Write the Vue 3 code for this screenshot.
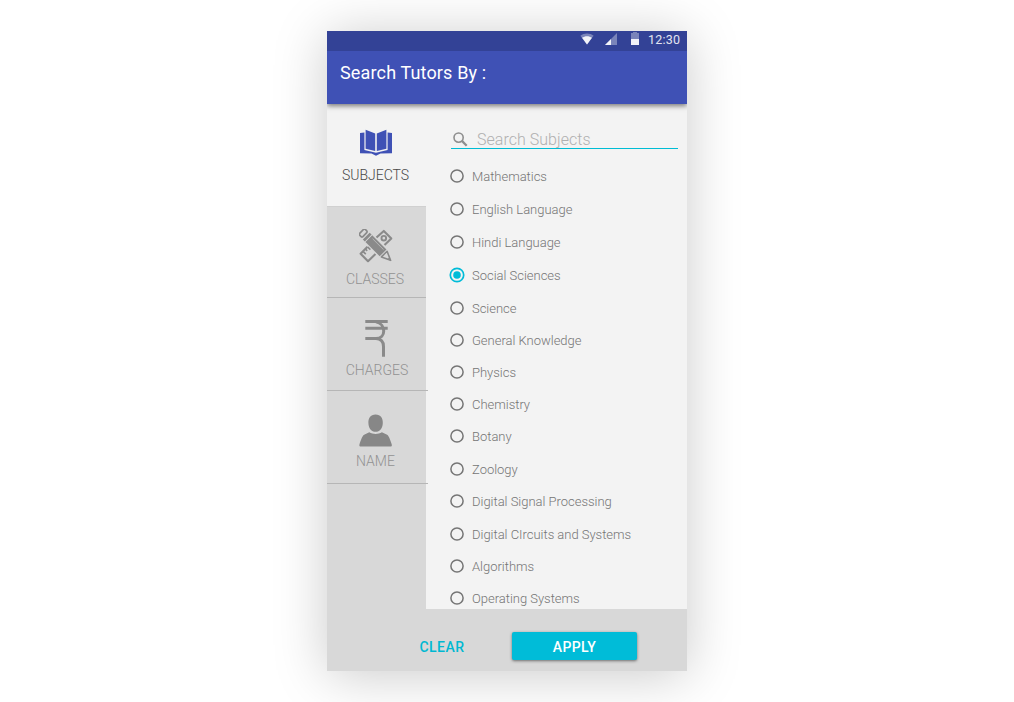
<script setup>
import { ref } from 'vue'

const tabs = [
  { id: 'subjects', label: 'SUBJECTS' },
  { id: 'classes', label: 'CLASSES' },
  { id: 'charges', label: 'CHARGES' },
  { id: 'name', label: 'NAME' },
]
const activeTab = ref('subjects')

const subjects = [
  { name: 'Mathematics', tall: true },
  { name: 'English Language', tall: true },
  { name: 'Hindi Language', tall: true },
  { name: 'Social Sciences', tall: true },
  { name: 'Science' },
  { name: 'General Knowledge' },
  { name: 'Physics' },
  { name: 'Chemistry' },
  { name: 'Botany', tall: true },
  { name: 'Zoology' },
  { name: 'Digital Signal Processing', tall: true },
  { name: 'Digital CIrcuits and Systems' },
  { name: 'Algorithms' },
  { name: 'Operating Systems' },
]
const selected = ref('Social Sciences')
</script>

<template>
  <main class="stage">
    <div class="phone">
      <div class="status">
        <svg class="wifi" width="14" height="12" viewBox="0 0 14 12">
          <path d="M0.4 2.7C4-.2 10-.2 13.6 2.7L7 11.6z" fill="#fff" opacity=".35" />
          <path d="M2 4.7C5 2.6 9 2.6 12 4.7L7 11.6z" fill="#fff" opacity=".9" />
        </svg>
        <svg class="cell" width="12" height="12" viewBox="0 0 12 12">
          <path d="M0 12 12 0V12z" fill="#fff" opacity=".35" />
          <path d="M0 12 6 6V12z" fill="#fff" opacity=".9" />
        </svg>
        <svg class="battery" width="8" height="13" viewBox="0 0 8 13">
          <path d="M2 0H6V1H8V7H0V1H2z" fill="#fff" opacity=".35" />
          <path d="M0 7H8V13H0z" fill="#fff" opacity=".93" />
        </svg>
        <span class="time">12:30</span>
      </div>
      <header class="header">Search Tutors By :</header>

      <div class="body">
        <nav class="tabs">
          <button
            v-for="tab in tabs"
            :key="tab.id"
            :class="['tab', tab.id, { active: tab.id === activeTab }]"
            @click="activeTab = tab.id"
          >
            <svg v-if="tab.id === 'subjects'" class="icon" width="32" height="27" viewBox="0 0 32 27" fill="#3f51b5">
              <path d="M5.6 .8 15.2 4.4V22L5.6 19.7z" />
              <path d="M26.4 .8 16.8 4.4V22L26.4 19.7z" />
              <path d="M0 4 4.4 3.4V21.1L16 23.8 27.6 21.1V3.4L32 4V24.2L20.5 24.4 16 26.8 11.5 24.4 0 24.2z" />
            </svg>
            <svg v-else-if="tab.id === 'classes'" class="icon" width="34" height="34" viewBox="0 0 34 34">
              <g fill="none" stroke="#8a8a8a" stroke-width="2.1" stroke-linejoin="round">
                <path d="M17.5 8.6 24.8 1.9 32.3 9.4 25.5 16" />
                <circle cx="24.8" cy="9.2" r="2.3" stroke-width="1.9" />
                <path d="M8.5 17.8 1.6 24.7 9 32.2 16.5 25" />
                <path d="M4 22.4 6.8 25.2M6.4 20 8.2 21.8M8.6 17.8 11.4 20.6" stroke-width="1.7" />
              </g>
              <g transform="translate(5.4 5.2) rotate(45)">
                <path d="M-5-5.6H30L40 0 30 5.6H-5z" fill="#d8d8d8" />
                <rect x="-4" y="-4" width="4.6" height="8" rx="1.3" fill="none" stroke="#8a8a8a" stroke-width="1.7" />
                <path d="M2.6-4.8H5.4V4.8H2.6zM6.3-4.8H26.4V4.8H6.3z" fill="#8a8a8a" />
                <path d="M9-2.6H24.5" stroke="#c4c4c4" stroke-width=".7" />
                <path d="M28.1-4 37 0 28.1 4z" fill="none" stroke="#8a8a8a" stroke-width="1.6" stroke-linejoin="round" />
                <path d="M34-1.5 38 0 34 1.5z" fill="#8a8a8a" />
              </g>
            </svg>
            <svg v-else-if="tab.id === 'charges'" class="icon" width="23" height="38" viewBox="0 0 23 38" fill="none" stroke="#8a8a8a" stroke-width="3">
              <path d="M.3 2.5H22.7M.3 9.2H22.7M.3 19.5H11C21.3 19.5 21.3 5 11 2.8" />
              <path d="M11 19.5C15.8 19.8 18.5 22.5 18.5 27.5V37.8" />
            </svg>
            <svg v-else class="icon" width="34" height="34" viewBox="0.4 0 34 34" fill="#878787">
              <path d="M17 .4C22.2.4 24.4 4.2 24.2 8.9 24 14.2 21.1 17.8 17 17.8S10 14.2 9.8 8.9C9.6 4.2 11.8.4 17 .4z" />
              <path d="M10.7 18.3C14.3 20.4 19.7 20.4 23.3 18.3L28.5 20.7C30.4 21.7 31.8 26.5 33.1 30.2 33.6 31.6 33 32.5 31.7 32.5H2.3C1 32.5 .4 31.6.9 30.2 2.2 26.5 3.6 21.7 5.5 20.7z" />
            </svg>
            <span class="label">{{ tab.label }}</span>
          </button>
        </nav>

        <section class="panel">
          <label class="search">
            <svg width="15" height="15" viewBox="0 0 15 15" fill="none" stroke="#8e8e8e">
              <circle cx="5.6" cy="5.6" r="4.6" stroke-width="1.6" />
              <path d="M8.9 8.9 13.7 13.7" stroke-width="2.3" />
            </svg>
            <span>Search Subjects</span>
          </label>
          <ul class="list">
            <li
              v-for="s in subjects"
              :key="s.name"
              :class="['row', { tall: s.tall, selected: s.name === selected }]"
              @click="selected = s.name"
            >
              <svg class="radio" width="16" height="16" viewBox="0 0 16 16">
                <template v-if="s.name === selected">
                  <circle cx="8" cy="8" r="6.7" fill="none" stroke="#00bcd8" stroke-width="1.7" />
                  <circle cx="8" cy="8" r="3.8" fill="#00bcd8" />
                </template>
                <circle v-else cx="8" cy="8" r="6.1" fill="none" stroke="#757575" stroke-width="1.5" />
              </svg>
              <span>{{ s.name }}</span>
            </li>
          </ul>
        </section>
      </div>

      <footer class="footer">
        <button class="clear">CLEAR</button>
        <button class="apply">APPLY</button>
      </footer>
    </div>
  </main>
</template>

<style>
body {
  background: #fff;
  overflow: hidden;
}
</style>

<style scoped>
.stage {
  position: relative;
  z-index: 0;
  box-sizing: border-box;
  width: 1014px;
  height: 702px;
  padding: 31px 0 0 327px;
  overflow: hidden;
  font-family: Roboto, sans-serif;
}
button {
  border: 0;
  padding: 0;
  margin: 0;
  background: none;
  font-family: inherit;
}
.phone {
  position: relative;
  z-index: 0;
  display: flex;
  flex-direction: column;
  width: 360px;
  height: 640px;
  background: #d8d8d8;
  box-shadow: 0 4px 50px rgba(0, 0, 0, 0.21);
}
.status {
  display: flex;
  box-sizing: border-box;
  height: 20px;
  padding-left: 253px;
  background: #334296;
  color: #e3e5f1;
}
.status svg {
  flex: none;
}
.wifi {
  margin-top: 2px;
}
.cell {
  margin: 2px 0 0 11px;
}
.battery {
  margin: 1px 0 0 14px;
}
.time {
  margin-left: 9px;
  font-size: 12.5px;
  line-height: 18px;
  letter-spacing: 0.25px;
}
.header {
  position: relative;
  box-sizing: border-box;
  height: 53px;
  padding-left: 13px;
  background: #3f51b5;
  color: #fff;
  font-size: 18px;
  line-height: 44px;
  letter-spacing: 0.15px;
  box-shadow: 0 2px 5px rgba(0, 0, 0, 0.5);
  clip-path: inset(0 0 -10px 0);
}
.body {
  display: flex;
  height: 505px;
}
.tabs {
  width: 99px;
}
.tab {
  display: flex;
  flex-direction: column;
  align-items: center;
  box-sizing: border-box;
  width: 101px;
  height: 93px;
  padding-right: 4px;
  border-bottom: 1px solid #b6b6b6;
  color: #929292;
}
.tab.active {
  width: 99px;
  height: 102px;
  padding-right: 1px;
  border: 0;
  background: #f3f3f3;
  color: #484848;
}
.tab.classes {
  width: 99px;
  height: 92px;
  padding-right: 3px;
  border-top: 1px solid #d0d0d0;
}
.icon {
  flex: none;
}
.subjects .icon {
  margin-top: 25px;
}
.classes .icon {
  margin-top: 22px;
  margin-left: 2px;
}
.charges .icon {
  margin-top: 21px;
  margin-left: 2px;
}
.name .icon {
  margin-top: 23px;
}
.label {
  font-size: 14px;
  font-weight: 300;
  line-height: 16px;
}
.subjects .label {
  margin: 11px 1px 0 0;
}
.classes .label {
  margin-top: 8px;
}
.charges .label {
  margin: 5px 0 0 3px;
}
.name .label {
  margin-top: 5px;
}
.panel {
  position: relative;
  z-index: -1;
  box-sizing: border-box;
  width: 261px;
  padding: 25px 0 0 24px;
  background: #f3f3f3;
}
.search {
  display: flex;
  box-sizing: border-box;
  width: 227px;
  height: 20px;
  margin-left: 1px;
  padding-left: 2px;
  border-bottom: 1px solid #00bcd4;
}
.search svg {
  flex: none;
  margin-top: 3px;
}
.search span {
  margin-left: 9px;
  color: #b0b0b0;
  font-size: 16px;
  font-weight: 300;
  line-height: 21px;
  letter-spacing: 0.03px;
}
.list {
  margin: 11px 0 0;
  padding: 0;
  list-style: none;
}
.row {
  display: flex;
  height: 32px;
  line-height: 33px;
  color: #757575;
  font-size: 13px;
  font-weight: 300;
  letter-spacing: -0.02px;
}
.row.tall {
  height: 33px;
}
.radio {
  flex: none;
  margin: 8px 7px 0 -1px;
}
.footer {
  display: flex;
  box-sizing: border-box;
  height: 62px;
  padding: 23px 0 0 92px;
}
.clear {
  width: 46px;
  height: 28px;
  color: #00b8d2;
  font-size: 14px;
  font-weight: 500;
  line-height: 30px;
  letter-spacing: 0.5px;
}
.apply {
  width: 125px;
  height: 28px;
  margin-left: 47px;
  border-radius: 2px;
  background: #00bcd8;
  box-shadow: 0 1px 3px rgba(0, 0, 0, 0.5);
  color: #fff;
  font-size: 14px;
  font-weight: 500;
  line-height: 30px;
  letter-spacing: 0.4px;
}
</style>
